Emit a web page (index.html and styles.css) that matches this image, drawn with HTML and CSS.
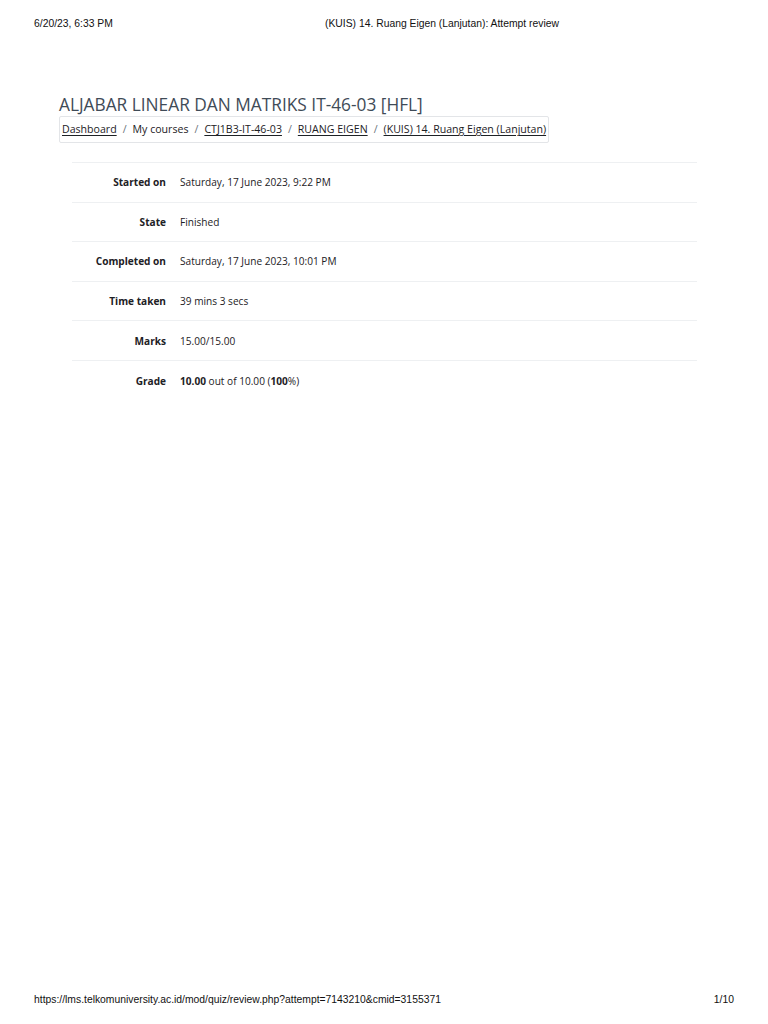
FILE: index.html
```html
<!DOCTYPE html>
<html>
<head>
<meta charset="utf-8">
<link rel="stylesheet" href="styles.css">
</head>
<body>
<div class="page">
  <div class="print-head">
    <span class="ph-date">6/20/23, 6:33 PM</span>
    <span class="ph-title">(KUIS) 14. Ruang Eigen (Lanjutan): Attempt review</span>
  </div>
  <main class="content">
    <h1 class="course">ALJABAR LINEAR DAN MATRIKS IT-46-03 [HFL]</h1>
    <nav class="crumbs">
      <a class="crumb">Dashboard</a><span class="sep">/</span>
      <span class="crumb plain">My courses</span><span class="sep">/</span>
      <a class="crumb">CTJ1B3-IT-46-03</a><span class="sep">/</span>
      <a class="crumb">RUANG EIGEN</a><span class="sep">/</span>
      <a class="crumb">(KUIS) 14. Ruang Eigen (Lanjutan)</a>
    </nav>
    <table class="summary">
      <tr><th>Started on</th><td>Saturday, 17 June 2023, 9:22 PM</td></tr>
      <tr><th>State</th><td>Finished</td></tr>
      <tr><th>Completed on</th><td>Saturday, 17 June 2023, 10:01 PM</td></tr>
      <tr><th>Time taken</th><td>39 mins 3 secs</td></tr>
      <tr><th>Marks</th><td>15.00/15.00</td></tr>
      <tr><th>Grade</th><td><b>10.00</b> out of 10.00 (<b>100</b>%)</td></tr>
    </table>
  </main>
  <div class="print-foot">
    <span>https://lms.telkomuniversity.ac.id/mod/quiz/review.php?attempt=7143210&amp;cmid=3155371</span>
    <span>1/10</span>
  </div>
</div>
</body>
</html>
```

FILE: styles.css
```css
html, body { margin: 0; padding: 0; background: #fff; }
.page {
  width: 768px;
  height: 1024px;
  display: flex;
  flex-direction: column;
  font-family: "Open Sans", sans-serif;
  color: #1d2125;
}
.print-head, .print-foot {
  font-family: "Liberation Sans", Arial, sans-serif;
  font-size: 10.35px;
  color: #111;
  display: flex;
}
.print-head { padding: 18px 34px 0 34px; height: 14px; }
.ph-date { width: 291px; }
.content { flex: 1; padding: 62px 71px 0 59px; }
.course {
  margin: 0;
  font-weight: 400;
  font-size: 17.3px;
  line-height: 22px;
  color: #3f4b57;
}
.crumbs {
  display: inline-flex;
  align-items: center;
  margin-top: 0;
  padding: 5px 2px 6px 2px;
  border: 1px solid #e3e5e8;
  border-radius: 2px;
  font-size: 10.6px;
  line-height: 14px;
}
.crumb { color: #1d2125; text-decoration: underline; text-underline-offset: 2px; }
.crumb.plain { text-decoration: none; }
.sep { color: #6a737b; padding: 0 6px; }
.summary {
  margin: 19px 0 0 13px;
  width: 625px;
  border-collapse: collapse;
  font-size: 10.1px;
}
.summary tr { height: 39.6px; border-top: 1px solid #eef0f2; }
.summary th {
  width: 94px;
  text-align: right;
  font-weight: 700;
  padding: 0 14px 0 0;
}
.summary td { padding: 0; }
.print-foot {
  justify-content: space-between;
  padding: 0 34px 0 34px;
  height: 30px;
}
```
